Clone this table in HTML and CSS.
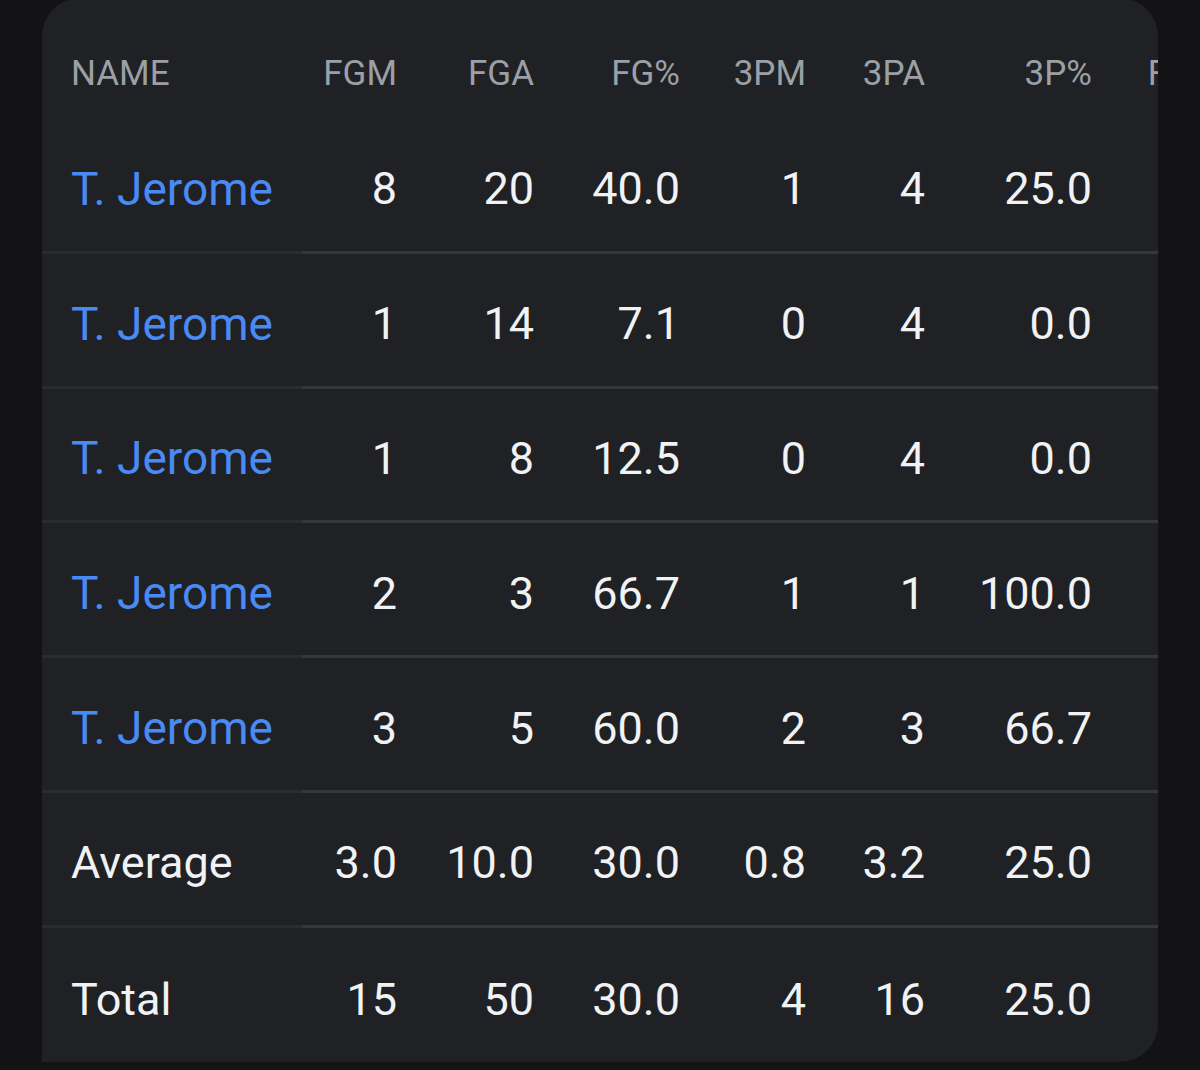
FILE: index.html
```html
<!DOCTYPE html>
<html lang="en">
<head>
<meta charset="utf-8">
<title>Stats</title>
<link rel="stylesheet" href="styles.css">
</head>
<body>
<div class="card">
  <div class="row head">
    <div class="cell name">NAME</div>
    <div class="cell">FGM</div>
    <div class="cell">FGA</div>
    <div class="cell">FG%</div>
    <div class="cell">3PM</div>
    <div class="cell">3PA</div>
    <div class="cell">3P%</div>
    <div class="cell">FTM</div>
  </div>
  <div class="row">
    <div class="cell name link">T. Jerome</div>
    <div class="cell">8</div><div class="cell">20</div><div class="cell">40.0</div>
    <div class="cell">1</div><div class="cell">4</div><div class="cell">25.0</div><div class="cell"></div>
  </div>
  <div class="row">
    <div class="cell name link">T. Jerome</div>
    <div class="cell">1</div><div class="cell">14</div><div class="cell">7.1</div>
    <div class="cell">0</div><div class="cell">4</div><div class="cell">0.0</div><div class="cell"></div>
  </div>
  <div class="row">
    <div class="cell name link">T. Jerome</div>
    <div class="cell">1</div><div class="cell">8</div><div class="cell">12.5</div>
    <div class="cell">0</div><div class="cell">4</div><div class="cell">0.0</div><div class="cell"></div>
  </div>
  <div class="row">
    <div class="cell name link">T. Jerome</div>
    <div class="cell">2</div><div class="cell">3</div><div class="cell">66.7</div>
    <div class="cell">1</div><div class="cell">1</div><div class="cell">100.0</div><div class="cell"></div>
  </div>
  <div class="row">
    <div class="cell name link">T. Jerome</div>
    <div class="cell">3</div><div class="cell">5</div><div class="cell">60.0</div>
    <div class="cell">2</div><div class="cell">3</div><div class="cell">66.7</div><div class="cell"></div>
  </div>
  <div class="row">
    <div class="cell name">Average</div>
    <div class="cell">3.0</div><div class="cell">10.0</div><div class="cell">30.0</div>
    <div class="cell">0.8</div><div class="cell">3.2</div><div class="cell">25.0</div><div class="cell"></div>
  </div>
  <div class="row last">
    <div class="cell name">Total</div>
    <div class="cell">15</div><div class="cell">50</div><div class="cell">30.0</div>
    <div class="cell">4</div><div class="cell">16</div><div class="cell">25.0</div><div class="cell"></div>
  </div>
</div>
</body>
</html>
```
FILE: styles.css
```css
html, body {
  margin: 0;
  padding: 0;
  background: #131315;
  height: 100%;
}
body {
  padding-left: 42px;
  font-family: Roboto, "Liberation Sans", sans-serif;
  overflow: hidden;
}
.card {
  margin-top: -2px;
  width: 1116px;
  height: 1064px;
  background: #202124;
  border-radius: 38px 38px 38px 0;
  overflow: hidden;
}
.row {
  display: grid;
  grid-template-columns: 260px 95px 137px 146px 126px 119px 167px 127px;
  height: 134.8px;
  width: 1177px;
  color: #f1f2f4;
  font-size: 45px;
}
.row.head {
  height: 121px;
  font-size: 35px;
  color: #9aa0a6;
}
.cell {
  box-sizing: border-box;
  display: flex;
  align-items: center;
  justify-content: flex-end;
  padding-top: 8px;
  border-bottom: 3px solid #36373b;
  white-space: nowrap;
}
.cell.name {
  justify-content: flex-start;
  padding-left: 29px;
  border-bottom-color: #2b2c2f;
}
.row .link {
  font-size: 46px;
  color: #4a8af4;
}
.head .cell {
  padding-top: 29px;
  border-bottom: none;
}
.last .cell {
  border-bottom: none;
}
```
